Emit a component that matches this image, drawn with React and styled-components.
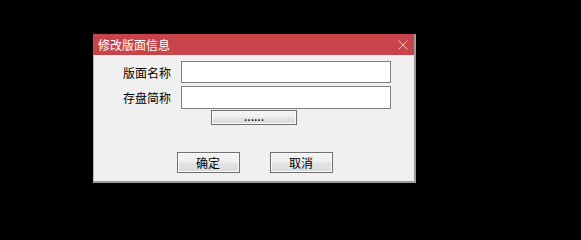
import styled, { createGlobalStyle } from "styled-components";

const GlobalStyle = createGlobalStyle`
  html, body {
    margin: 0;
    padding: 0;
    background: #000;
  }
  * {
    box-sizing: border-box;
  }
`;

const Page = styled.div`
  width: 581px;
  height: 232px;
  background: #000;
  padding: 34px 0 0 93px;
  font-family: "Noto Sans CJK SC", "Microsoft YaHei", sans-serif;
  font-size: 12px;
`;

const Dialog = styled.div`
  width: 323px;
  height: 149px;
  display: flex;
  flex-direction: column;
  background: #f0f0f0;
  border-left: 1px solid #b9b9b9;
  border-right: 2px solid #9c9c9c;
  border-bottom: 2px solid #9c9c9c;
`;

const TitleBar = styled.div`
  height: 21px;
  margin-left: -1px;
  display: flex;
  align-items: center;
  justify-content: space-between;
  padding: 0 5px 0 5px;
  background: #c9444a;
  color: #fff;
  line-height: 1;
`;

const Title = styled.span`
  font-size: 12px;
  letter-spacing: 0;
`;

const CloseIcon = styled.svg`
  width: 10px;
  height: 10px;
  margin-right: 1px;
  display: block;
`;

const Body = styled.div`
  flex: 1;
  display: flex;
  flex-direction: column;
  padding-top: 6px;
`;

const Form = styled.div`
  display: grid;
  grid-template-columns: 77px 210px;
  grid-template-rows: 22px 23px 15px;
  column-gap: 10px;
  row-gap: 3px;
`;

const Label = styled.label`
  display: flex;
  align-items: center;
  justify-content: flex-end;
  color: #000;
  font-size: 12px;
`;

const Input = styled.input`
  width: 100%;
  height: 100%;
  margin: 0;
  padding: 0 3px;
  background: #fff;
  border: 1px solid #7f7f7f;
  outline: none;
  font: inherit;
`;

const Button = styled.button`
  width: ${(p) => p.$width}px;
  height: ${(p) => p.$height}px;
  margin: 0;
  padding: 0;
  display: flex;
  align-items: ${(p) => (p.$bottom ? "flex-end" : "center")};
  justify-content: center;
  border: 1px solid #6f6f6f;
  box-shadow: inset 0 0 0 1px #fbfbfb;
  background: linear-gradient(#f3f3f3, #f0f0f0 45%, #e3e3e3 55%, #dadada);
  color: #000;
  font-family: inherit;
  font-size: 12px;
  line-height: 1;
`;

const DotsCell = styled.div`
  grid-column: 2;
  margin-top: -2px;
  padding-left: 30px;
`;

const Dots = styled.span`
  padding-bottom: 2px;
  letter-spacing: 0;
`;

const Footer = styled.div`
  display: flex;
  justify-content: center;
  gap: 30px;
  margin-top: 25px;
  padding-left: 1px;
`;

export default function App() {
  return (
    <>
      <GlobalStyle />
      <Page>
        <Dialog>
          <TitleBar>
            <Title>修改版面信息</Title>
            <CloseIcon viewBox="0 0 10 10">
              <path d="M0.5 0.5 L9.5 9.5 M9.5 0.5 L0.5 9.5" stroke="#f3c4c6" strokeWidth="1" fill="none" />
            </CloseIcon>
          </TitleBar>
          <Body>
            <Form>
              <Label>版面名称</Label>
              <Input />
              <Label>存盘简称</Label>
              <Input />
              <DotsCell>
                <Button $width={86} $height={15} $bottom>
                  <Dots>......</Dots>
                </Button>
              </DotsCell>
            </Form>
            <Footer>
              <Button $width={63} $height={21}>确定</Button>
              <Button $width={63} $height={21}>取消</Button>
            </Footer>
          </Body>
        </Dialog>
      </Page>
    </>
  );
}
